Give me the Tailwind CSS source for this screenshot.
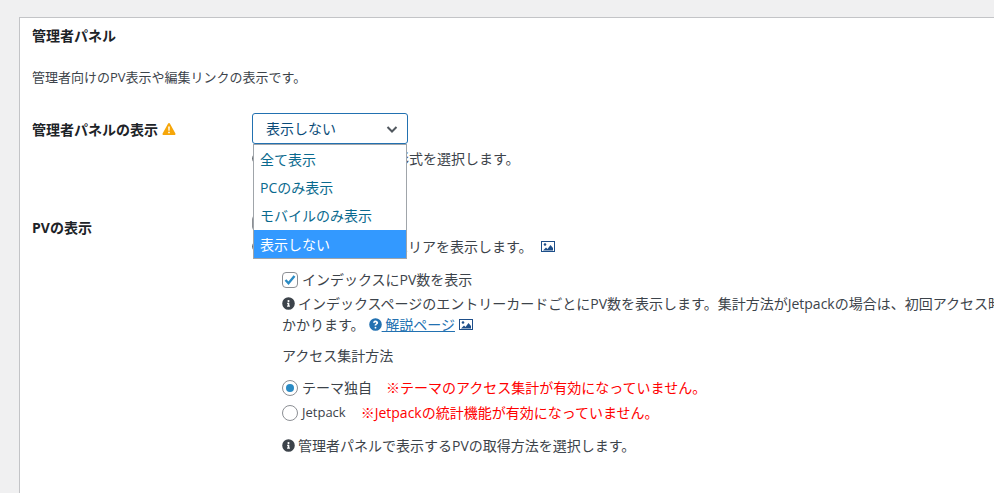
<!DOCTYPE html>
<html lang="ja">

<head>
    <meta charset="UTF-8">
    <script src="https://cdn.jsdelivr.net/npm/@tailwindcss/browser@4"></script>
    <title>管理者パネル</title>
</head>

<body class="h-[493px] overflow-hidden bg-[#f0f0f1] font-['Open_Sans','Noto_Sans_CJK_JP',sans-serif] text-[14px] text-[#3c434a]">
    <div class="ml-[19px] mt-[17px] h-[476px] w-[975px] overflow-hidden border-l border-t border-[#c3c4c7] bg-white">
        <h2 class="pl-3 pt-[7px] text-[14px] leading-[21px] font-bold text-[#1d2327]">管理者パネル</h2>
        <p class="pl-3 pt-[21px] text-[13px] leading-[21px]">管理者向けのPV表示や編集リンクの表示です。</p>

        <!-- admin panel row -->
        <div class="mt-[25px] flex pl-3">
            <div class="flex h-[31px] w-[220px] shrink-0 items-center gap-1 pt-[3px] font-bold text-[#1d2327]">
                <span class="leading-none">管理者パネルの表示</span>
                <svg class="mt-[-3px] h-[14px] w-[14px]" viewBox="0 0 14 14"><path fill="#f6a609" d="M7 1c.4 0 .7.2.9.5l5.500 9.900c.4.700-.1 1.600-.9 1.600H1.500c-.8 0-1.300-.9-.9-1.600L6.100 1.500C6.300 1.200 6.600 1 7 1z"/><path fill="#fff" d="M6.200 4.500h1.600l-.2 4.300H6.400zM6.200 9.700h1.600v1.600H6.200z"/></svg>
            </div>
            <div class="relative w-[740px]">
                <div class="flex h-[31px] w-[156px] items-center justify-between rounded-[3px] border border-[#2271b1] pl-[13px] pr-[7px] text-[#0a4b78]">
                    <span class="leading-none">表示しない</span>
                    <svg class="h-[16px] w-[16px]" viewBox="0 0 16 16" fill="none" stroke="#50575e" stroke-width="2"><path d="M3.500 6l4.500 4.500L12.500 6"/></svg>
                </div>
                <div class="absolute left-px top-[31px] z-10 w-[154px] border border-[#a0a5aa] bg-white text-[#0a6a8e]">
                    <div class="h-[28px] pl-[6px] leading-[30px]">全て表示</div>
                    <div class="h-[28px] pl-[6px] leading-[30px]">PCのみ表示</div>
                    <div class="h-[29px] pl-[6px] leading-[30px]">モバイルのみ表示</div>
                    <div class="h-[28px] bg-[#3399ff] pl-[6px] leading-[30px] text-white">表示しない</div>
                </div>
                <div class="mt-[4px] flex h-[21px] items-center gap-[4px]">
                    <svg class="h-[13px] w-[13px]" viewBox="0 0 512 512"><path fill="#3c434a" d="M256 8a248 248 0 1 0 0 496 248 248 0 0 0 0-496zm0 110a42 42 0 1 1 0 84 42 42 0 0 1 0-84zm56 254c0 7-5 12-12 12h-88c-7 0-12-5-12-12v-24c0-7 5-12 12-12h12v-64h-12c-7 0-12-5-12-12v-24c0-7 5-12 12-12h64c7 0 12 5 12 12v100h12c7 0 12 5 12 12z"/></svg>
                    <span class="leading-none">管理者パネルの表示形式を選択します。</span>
                </div>
            </div>
        </div>

        <!-- PV row -->
        <div class="mt-[43px] flex pl-3">
            <div class="w-[220px] shrink-0 pt-[5px] font-bold leading-[21px] text-[#1d2327]">PVの表示</div>
            <div class="w-[780px] shrink-0">
                <div class="flex h-[22px] items-center gap-[4px]">
                    <span class="h-[16px] w-[16px] rounded-[4px] border border-[#8c8f94] bg-white"></span>
                    <span class="leading-none">管理者パネルを表示</span>
                </div>
                <div class="mt-[2px] flex h-[21px] items-center gap-[3px]">
                    <svg class="h-[13px] w-[13px]" viewBox="0 0 512 512"><path fill="#3c434a" d="M256 8a248 248 0 1 0 0 496 248 248 0 0 0 0-496zm0 110a42 42 0 1 1 0 84 42 42 0 0 1 0-84zm56 254c0 7-5 12-12 12h-88c-7 0-12-5-12-12v-24c0-7 5-12 12-12h12v-64h-12c-7 0-12-5-12-12v-24c0-7 5-12 12-12h64c7 0 12 5 12 12v100h12c7 0 12 5 12 12z"/></svg>
                    <span class="leading-none">管理者パネルの表示エリアを表示します。</span>
                    <svg class="ml-[5px] h-[13px] w-[14px]" viewBox="0 0 14 13"><rect x=".5" y="1.500" width="13" height="10" fill="#fff" stroke="#1d4e89"/><circle cx="4" cy="4.500" r="1.300" fill="#1d4e89"/><path fill="#1d4e89" d="M2 10.500l3-3 1.500 1.500 3-4 2.500 3v2.500z"/></svg>
                </div>

                <div class="mt-[12px] pl-[30px]">
                    <div class="flex h-[21px] items-center gap-[4px]">
                        <span class="flex h-[16px] w-[16px] items-center justify-center rounded-[4px] border border-[#8c8f94] bg-white">
                            <svg class="h-[14px] w-[14px]" viewBox="0 0 14 14" fill="none" stroke="#2a8bc4" stroke-width="2.400"><path d="M2.500 7l3 3.200 6-7.200"/></svg>
                        </span>
                        <span class="leading-none">インデックスにPV数を表示</span>
                    </div>
                    <div class="mt-[3px] flex h-[21px] items-center gap-[3px] whitespace-nowrap">
                        <svg class="h-[13px] w-[13px] shrink-0" viewBox="0 0 512 512"><path fill="#3c434a" d="M256 8a248 248 0 1 0 0 496 248 248 0 0 0 0-496zm0 110a42 42 0 1 1 0 84 42 42 0 0 1 0-84zm56 254c0 7-5 12-12 12h-88c-7 0-12-5-12-12v-24c0-7 5-12 12-12h12v-64h-12c-7 0-12-5-12-12v-24c0-7 5-12 12-12h64c7 0 12 5 12 12v100h12c7 0 12 5 12 12z"/></svg>
                        <span class="leading-none">インデックスページのエントリーカードごとにPV数を表示します。集計方法がJetpackの場合は、初回アクセス時に</span>
                    </div>
                    <div class="flex h-[21px] items-center">
                        <span class="leading-none">かかります。</span>
                        <svg class="ml-[4px] h-[13px] w-[13px]" viewBox="0 0 512 512"><path fill="#2271b1" d="M256 8a248 248 0 1 0 0 496 248 248 0 0 0 0-496zm0 90c52 0 104 38 104 92 0 66-70 66-70 90v6c0 7-5 12-12 12h-48c-7 0-12-5-12-12v-10c0-46 68-52 68-84 0-16-16-26-32-26-20 0-30 10-44 28-4 5-11 6-16 2l-28-22c-5-4-6-11-3-16 22-34 52-60 93-60zm0 246a36 36 0 1 1 0 72 36 36 0 0 1 0-72z"/></svg>
                        <a href="#" class="leading-[17px] text-[#2271b1] underline">&nbsp;解説ページ</a>
                        <svg class="ml-[4px] h-[13px] w-[14px]" viewBox="0 0 14 13"><rect x=".5" y="1.500" width="13" height="10" fill="#fff" stroke="#1d4e89"/><circle cx="4" cy="4.500" r="1.300" fill="#1d4e89"/><path fill="#1d4e89" d="M2 10.500l3-3 1.500 1.500 3-4 2.500 3v2.500z"/></svg>
                    </div>

                    <div class="mt-[10px] h-[21px] leading-[21px]">アクセス集計方法</div>

                    <div class="mt-[11px] flex h-[21px] items-center">
                        <span class="flex h-[16px] w-[16px] items-center justify-center rounded-full border border-[#8c8f94] bg-white"><span class="h-[8px] w-[8px] rounded-full bg-[#2a8bc4]"></span></span>
                        <span class="ml-[4px] leading-none">テーマ独自</span>
                        <span class="ml-[14px] leading-none text-[#ff0000]">※テーマのアクセス集計が有効になっていません。</span>
                    </div>
                    <div class="mt-[4px] flex h-[21px] items-center">
                        <span class="h-[16px] w-[16px] rounded-full border border-[#8c8f94] bg-white"></span>
                        <span class="ml-[4px] text-[13px] leading-none">Jetpack</span>
                        <span class="ml-[15px] leading-none text-[#ff0000]">※Jetpackの統計機能が有効になっていません。</span>
                    </div>

                    <div class="mt-[12px] flex h-[21px] items-center gap-[3px]">
                        <svg class="h-[13px] w-[13px]" viewBox="0 0 512 512"><path fill="#3c434a" d="M256 8a248 248 0 1 0 0 496 248 248 0 0 0 0-496zm0 110a42 42 0 1 1 0 84 42 42 0 0 1 0-84zm56 254c0 7-5 12-12 12h-88c-7 0-12-5-12-12v-24c0-7 5-12 12-12h12v-64h-12c-7 0-12-5-12-12v-24c0-7 5-12 12-12h64c7 0 12 5 12 12v100h12c7 0 12 5 12 12z"/></svg>
                        <span class="leading-none">管理者パネルで表示するPVの取得方法を選択します。</span>
                    </div>
                </div>
            </div>
        </div>
    </div>
</body>

</html>
